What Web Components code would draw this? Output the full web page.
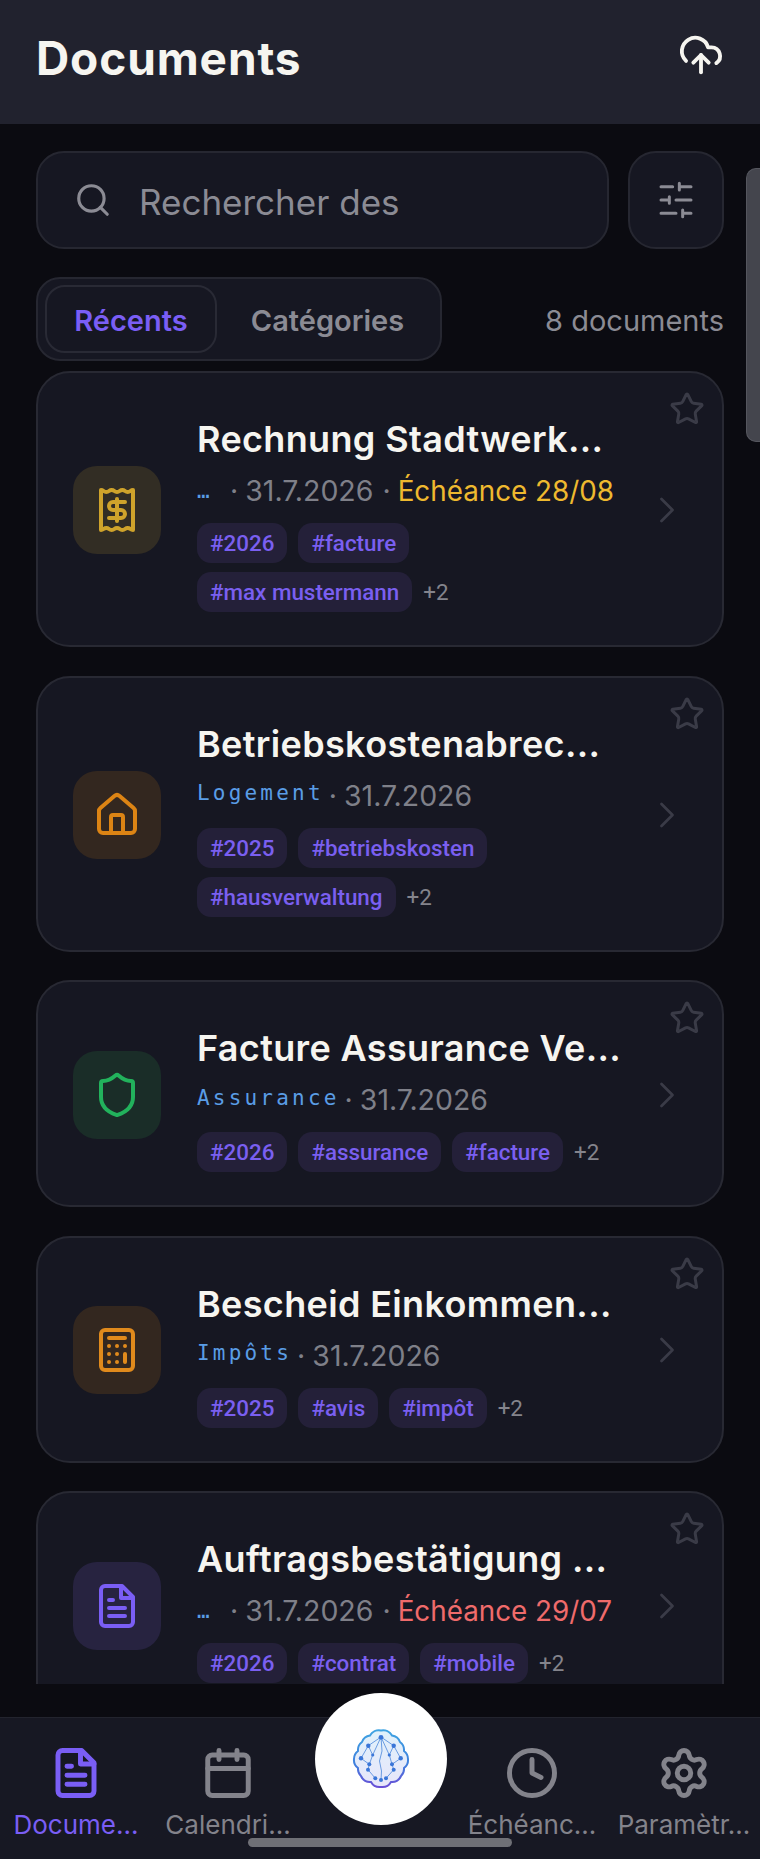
<!doctype html>
<html lang="fr">
<head>
<meta charset="utf-8">
<title>Documents</title>
<style>
html, body { margin: 0; background: #0b0b11; }
body { font-family: Inter, "Liberation Sans", sans-serif; }
</style>
</head>
<body>
<doc-screen>
  <doc-header slot="header">Documents</doc-header>
  <doc-toolbar slot="toolbar" placeholder="Rechercher des" count="8 documents"></doc-toolbar>
</doc-screen>

<script>
const ICONS = {
  cloud: '<path d="M4.2 15.1A7 7 0 1 1 15.71 8h1.79a4.5 4.5 0 0 1 2.5 8.2"/><path d="M12 12v9"/><path d="m16 16-4-4-4 4"/>',
  search: '<path d="m21 21-4.34-4.34"/><circle cx="11" cy="11" r="8"/>',
  sliders: '<path d="M21 4h-7M10 4H3M21 12h-9M8 12H3M21 20h-5M12 20H3M14 2v4M8 10v4M16 18v4"/>',
  star: '<path d="M11.5 2.3a.53.53 0 0 1 1 0l2.3 4.67a2.12 2.12 0 0 0 1.6 1.16l5.16.75a.53.53 0 0 1 .3.9l-3.74 3.64a2.12 2.12 0 0 0-.61 1.88l.88 5.14a.53.53 0 0 1-.77.56l-4.62-2.43a2.12 2.12 0 0 0-1.97 0L6.4 21.01a.53.53 0 0 1-.77-.56l.88-5.14a2.12 2.12 0 0 0-.61-1.88L2.16 9.79a.53.53 0 0 1 .3-.9l5.16-.76a2.12 2.12 0 0 0 1.6-1.16z"/>',
  chevron: '<path d="m9 6 6 6-6 6"/>',
  receipt: '<path d="M4 2v20c1.3 0 1.3-1 2.67-1s1.3 1 2.67 1 1.3-1 2.66-1 1.3 1 2.67 1 1.3-1 2.67-1 1.3 1 2.66 1V2c-1.3 0-1.3 1-2.66 1s-1.3-1-2.67-1-1.3 1-2.67 1-1.3-1-2.66-1-1.3 1-2.67 1S5.3 2 4 2Z"/><path d="M16 8h-6a2 2 0 1 0 0 4h4a2 2 0 1 1 0 4H8"/><path d="M12 17.5v-11"/>',
  house: '<path d="M15 21v-8a1 1 0 0 0-1-1h-4a1 1 0 0 0-1 1v8"/><path d="M3 10a2 2 0 0 1 .709-1.528l7-5.999a2 2 0 0 1 2.582 0l7 5.999A2 2 0 0 1 21 10v9a2 2 0 0 1-2 2H5a2 2 0 0 1-2-2z"/>',
  shield: '<path d="M20 13c0 5-3.5 7.5-7.66 8.95a1 1 0 0 1-.67-.01C7.5 20.5 4 18 4 13V6a1 1 0 0 1 1-1c2 0 4.5-1.2 6.24-2.72a1.17 1.17 0 0 1 1.52 0C14.51 3.81 17 5 19 5a1 1 0 0 1 1 1z"/>',
  calculator: '<rect x="4" y="2" width="16" height="20" rx="2"/><path d="M8 6h8M16 14v4M16 10h.01M12 10h.01M8 10h.01M12 14h.01M8 14h.01M12 18h.01M8 18h.01"/>',
  file: '<path d="M14.5 2H6a2 2 0 0 0-2 2v16a2 2 0 0 0 2 2h12a2 2 0 0 0 2-2V7.5L14.5 2z"/><path d="M14 2v6h6"/><path d="M16 13H8M16 17H8M10 9H8"/>',
  calendar: '<rect x="3" y="4" width="18" height="18" rx="2"/><path d="M16 2v4M8 2v4M3 10h18"/>',
  clock: '<circle cx="12" cy="12" r="10"/><path d="M12 6v6l4 2"/>',
  gear: '<path d="M9.671 4.136a2.34 2.34 0 0 1 4.659 0 2.34 2.34 0 0 0 3.319 1.915 2.34 2.34 0 0 1 2.33 4.033 2.34 2.34 0 0 0 0 3.831 2.34 2.34 0 0 1-2.33 4.033 2.34 2.34 0 0 0-3.319 1.915 2.34 2.34 0 0 1-4.659 0 2.34 2.34 0 0 0-3.32-1.915 2.34 2.34 0 0 1-2.33-4.033 2.34 2.34 0 0 0 0-3.831A2.34 2.34 0 0 1 6.35 6.051a2.34 2.34 0 0 0 3.319-1.915"/><circle cx="12" cy="12" r="3"/>'
}

function icon (name, size, width) {
  return `<svg width="${size}" height="${size}" viewBox="0 0 24 24" fill="none" stroke="currentColor" stroke-width="${width || 2}" stroke-linecap="round" stroke-linejoin="round">${ICONS[name]}</svg>`
}

class DocScreen extends HTMLElement {
  constructor () {
    super()
    this.attachShadow({ mode: 'open' }).innerHTML = `
<style>
:host { display: flex; flex-direction: column; height: 1859px; overflow: hidden; position: relative; background: #0b0b11; }
.list { flex: 1; min-height: 0; margin: 0 0 33px; padding: 0 36px; overflow: hidden; display: flex; flex-direction: column; gap: 28.5px; }
.thumb { position: absolute; right: 0; top: 168px; width: 14px; height: 274px; box-sizing: border-box; background: #44454d; border: 1px solid #55565e; border-right: 0; border-radius: 10px 0 0 10px; }
</style>
<slot name="header"></slot>
<slot name="toolbar"></slot>
<div class="list"><slot></slot></div>
<slot name="nav"></slot>
<div class="thumb"></div>`
  }
}

class DocHeader extends HTMLElement {
  constructor () {
    super()
    this.attachShadow({ mode: 'open' }).innerHTML = `
<style>
:host { display: flex; align-items: center; justify-content: space-between; height: 124px; padding: 0 36px 8px 36px; box-sizing: border-box; background: #21222e; color: #f6f5f0; }
h1 { margin: 0; font: 700 46px/1 Inter, sans-serif; letter-spacing: .9px; }
svg { display: block; margin-top: -6px; }
</style>
<h1><slot></slot></h1>
${icon('cloud', 46, 2)}`
  }
}

class DocToolbar extends HTMLElement {
  constructor () {
    super()
    const shadow = this.attachShadow({ mode: 'open' })
    shadow.innerHTML = `
<style>
:host { display: block; padding: 27px 36px 10px; color: #8b8b94; }
.top { display: flex; gap: 19px; height: 98px; }
.search, .filter, .tabs, .tab { box-sizing: border-box; border: 2px solid #262731; background: #161722; }
.search { flex: 1; display: flex; align-items: center; gap: 27px; padding-left: 36px; border-radius: 28px; font-size: 35px; }
.search svg { flex: none; }
.search span { padding-top: 3px; }
.filter { width: 96px; border-radius: 28px; display: flex; align-items: center; justify-content: center; }
.row { display: flex; align-items: center; justify-content: space-between; margin-top: 28px; }
.tabs { display: flex; align-items: center; width: 406px; height: 84px; padding: 0 7px; border-radius: 24px; font-size: 29px; font-weight: 600; }
.tab { border-color: transparent; background: none; height: 68px; padding-top: 3px; display: flex; align-items: center; justify-content: center; }
.tab.on { width: 172px; border-color: #292a35; border-radius: 20px; color: #7a5ef5; }
.tab.off { flex: 1; padding-left: 5px; }
.count { font-size: 29px; padding-top: 2px; }
</style>
<div class="top">
  <div class="search">${icon('search', 38, 2)}<span id="ph"></span></div>
  <div class="filter">${icon('sliders', 40, 1.8)}</div>
</div>
<div class="row">
  <div class="tabs"><div class="tab on">Récents</div><div class="tab off">Catégories</div></div>
  <div class="count" id="count"></div>
</div>`
    shadow.getElementById('ph').textContent = this.getAttribute('placeholder')
    shadow.getElementById('count').textContent = this.getAttribute('count')
  }
}

class DocCard extends HTMLElement {
  constructor () {
    super()
    const shadow = this.attachShadow({ mode: 'open' })
    shadow.innerHTML = `
<style>
:host { display: flex; flex: none; align-items: center; position: relative; box-sizing: border-box; padding: 35px 33px 33px 35px; border: 2px solid #282933; border-radius: 34px; background: #161722; color: #f6f5f0; }
.box { flex: none; width: 88px; height: 88px; margin: 0 36px 0 0; border-radius: 24px; display: flex; align-items: center; justify-content: center; color: var(--tone); background: var(--tint); }
.body { flex: 1; min-width: 0; margin-right: 20px; }
.title { height: 62px; line-height: 62px; font-size: 36px; font-weight: 600; letter-spacing: .35px; white-space: nowrap; }
.meta { height: 41px; padding-bottom: 3px; margin-bottom: 9px; display: flex; align-items: center; font-size: 28.5px; color: #7f8089; white-space: nowrap; }
.tags { display: flex; flex-wrap: wrap; align-items: center; gap: 9px 11px; }
.next { flex: none; color: #3a3b47; }
.star { position: absolute; right: 17px; top: 18px; color: #3a3b47; }
svg { display: block; }
</style>
<div class="box" id="box"></div>
<div class="body">
  <div class="title"><slot name="title"></slot></div>
  <div class="meta"><slot name="meta"></slot></div>
  <div class="tags"><slot></slot></div>
</div>
<div class="next">${icon('chevron', 44, 1.5)}</div>
<div class="star">${icon('star', 36, 2)}</div>`
    const box = shadow.getElementById('box')
    box.innerHTML = icon(this.getAttribute('icon'), 48, 2)
    this.style.setProperty('--tone', this.getAttribute('tone'))
    this.style.setProperty('--tint', this.getAttribute('tint'))
  }
}

class DocMeta extends HTMLElement {
  constructor () {
    super()
    const shadow = this.attachShadow({ mode: 'open' })
    const cat = this.getAttribute('cat')
    const due = this.getAttribute('due')
    const dueColor = this.getAttribute('due-color')
    shadow.innerHTML = `
<style>
:host { display: flex; align-items: center; white-space: nowrap; }
.cat { font: 500 21px/1 "DejaVu Sans Mono", "Liberation Mono", monospace; letter-spacing: 3.2px; color: #5a9de6; margin-top: -3px; }
.cat.short { width: 28px; letter-spacing: 0; margin-top: 2px; }
.sep { margin: 0 7px 0 5px; }
.sep.b { margin-left: 9px; margin-right: 7px; }
.due { color: ${dueColor}; font-size: 27.8px; }
</style>
<span class="cat ${cat === '…' ? 'short' : ''}">${cat}</span><span class="sep">·</span><span>31.7.2026</span>${due ? `<span class="sep b">·</span><span class="due">${due}</span>` : ''}`
  }
}

class DocTag extends HTMLElement {
  constructor () {
    super()
    this.attachShadow({ mode: 'open' }).innerHTML = `
<style>
:host { display: block; height: 40px; padding: 0 13px; border-radius: 14px; background: #242039; color: #7a5ff0; font: 500 22.4px/40px Roboto, sans-serif; white-space: nowrap; }
:host([more]) { background: none; color: #84848c; padding: 0; font-weight: 400; }
</style>
<slot></slot>`
  }
}

class DocNav extends HTMLElement {
  constructor () {
    super()
    this.attachShadow({ mode: 'open' }).innerHTML = `
<style>
:host { display: grid; grid-template-columns: repeat(5, 1fr); height: 142px; box-sizing: border-box; position: relative; background: #171823; border-top: 1px solid #23242e; }
.fab { position: absolute; left: 315px; top: -25px; width: 132px; height: 132px; border-radius: 50%; background: #fff; display: flex; align-items: center; justify-content: center; }
.bar { position: absolute; left: 248px; bottom: 12px; width: 264px; height: 9px; border-radius: 5px; background: #6f7076; }
</style>
<slot></slot>
<div class="fab">
  <svg width="60" height="60" viewBox="0 0 60 60" fill="none">
    <defs>
      <linearGradient id="edge" x1="0" y1="0" x2="0" y2="1"><stop offset="0" stop-color="#3fa4e2"/><stop offset=".6" stop-color="#3f7fdd"/><stop offset="1" stop-color="#6a4fd6"/></linearGradient>
      <linearGradient id="inner" x1="0" y1="0" x2="0" y2="1"><stop offset="0" stop-color="#dff1fb"/><stop offset="1" stop-color="#e8e6fa"/></linearGradient>
    </defs>
    <path d="M30 1.5A10 10 0 0 1 41 6.5 10 10 0 0 1 49 13 10 10 0 0 1 53 22 10 10 0 0 1 57 30 10 10 0 0 1 53 39 10 10 0 0 1 50 47 10 10 0 0 1 40 53 10 10 0 0 1 30 58 10 10 0 0 1 20 53 10 10 0 0 1 10 47 10 10 0 0 1 7 39 10 10 0 0 1 3 30 10 10 0 0 1 7 22 10 10 0 0 1 11 13 10 10 0 0 1 19 6.5 10 10 0 0 1 30 1.5Z" fill="url(#inner)" stroke="url(#edge)" stroke-width="2"/>
    <path d="M30 8 17.3 16.7 10 29.3 18.3 35.3 17 40.7 24.3 49.3M30 8 42.7 16.7 49.7 29.3 41 35.3 42.7 40.7 35 49.3M30 8 21.7 26 18.3 35.3M30 8 38.3 26 41 35.3M30 8 31 22 28.5 32 30.5 42 30 51M17.3 16.7 21.7 26M42.7 16.7 38.3 26" stroke="#4a86da" stroke-width=".8"/>
    <g fill="#3a76d8">
      <circle cx="30" cy="8.3" r="2.4"/><circle cx="17.3" cy="16.7" r="2.2"/><circle cx="42.7" cy="16.7" r="2.2"/>
      <circle cx="10" cy="29.3" r="2.2"/><circle cx="49.7" cy="29.3" r="2.2"/><circle cx="21.7" cy="26" r="1.6"/>
      <circle cx="38.3" cy="26" r="1.6"/><circle cx="18.3" cy="35.3" r="2"/><circle cx="41" cy="35.3" r="2"/>
      <circle cx="17" cy="40.7" r="2"/><circle cx="42.7" cy="40.7" r="2"/><circle cx="24.3" cy="49.3" r="2"/>
      <circle cx="30" cy="51" r="2"/><circle cx="35" cy="49.3" r="2"/>
    </g>
  </svg>
</div>
<div class="bar"></div>`
  }
}

class NavItem extends HTMLElement {
  constructor () {
    super()
    const name = this.getAttribute('icon')
    this.attachShadow({ mode: 'open' }).innerHTML = `
<style>
:host { display: flex; flex-direction: column; align-items: center; padding-top: 28px; color: #83838b; white-space: nowrap; }
:host([active]) { color: #7a5ef5; }
svg { display: block; }
.label { font-size: 26px; line-height: 30px; margin-top: 10px; }
</style>
${name ? icon(name, 54, 2.2) : ''}
<div class="label"><slot></slot></div>`
  }
}

customElements.define('doc-screen', DocScreen)
customElements.define('doc-header', DocHeader)
customElements.define('doc-toolbar', DocToolbar)
customElements.define('doc-card', DocCard)
customElements.define('doc-meta', DocMeta)
customElements.define('doc-tag', DocTag)
customElements.define('doc-nav', DocNav)
customElements.define('nav-item', NavItem)

// the cards are listed as data, same markup for each
const docs = [
  { title: 'Rechnung Stadtwerk...', icon: 'receipt', tone: '#cfa32b', tint: '#322d24', cat: '…', due: 'Échéance 28/08', dueColor: '#eeb92f', tags: ['#2026', '#facture', '#max mustermann'] },
  { title: 'Betriebskostenabrec...', icon: 'house', tone: '#dc8414', tint: '#33271f', cat: 'Logement', tags: ['#2025', '#betriebskosten', '#hausverwaltung'] },
  { title: 'Facture Assurance Ve...', icon: 'shield', tone: '#22b25c', tint: '#1a2d28', cat: 'Assurance', tags: ['#2026', '#assurance', '#facture'] },
  { title: 'Bescheid Einkommen...', icon: 'calculator', tone: '#e08a1c', tint: '#33271f', cat: 'Impôts', tags: ['#2025', '#avis', '#impôt'] },
  { title: 'Auftragsbestätigung ...', icon: 'file', tone: '#7a5ef5', tint: '#272340', cat: '…', due: 'Échéance 29/07', dueColor: '#ef6b6b', tags: ['#2026', '#contrat', '#mobile'] }
]

const screen = document.querySelector('doc-screen')
for (const d of docs) {
  const card = document.createElement('div')
  const tags = d.tags.map(t => `<doc-tag>${t}</doc-tag>`).join('')
  card.innerHTML = `<doc-card icon="${d.icon}" tone="${d.tone}" tint="${d.tint}">
    <span slot="title">${d.title}</span>
    <doc-meta slot="meta" cat="${d.cat}" due="${d.due || ''}" due-color="${d.dueColor || ''}"></doc-meta>
    ${tags}<doc-tag more>+2</doc-tag>
  </doc-card>`
  screen.appendChild(card.firstElementChild)
}

const nav = document.createElement('doc-nav')
nav.slot = 'nav'
nav.innerHTML = `<nav-item icon="file" active>Docume...</nav-item><nav-item icon="calendar">Calendri...</nav-item><span></span><nav-item icon="clock">Échéanc...</nav-item><nav-item icon="gear">Paramètr...</nav-item>`
screen.appendChild(nav)
</script>
</body>
</html>
